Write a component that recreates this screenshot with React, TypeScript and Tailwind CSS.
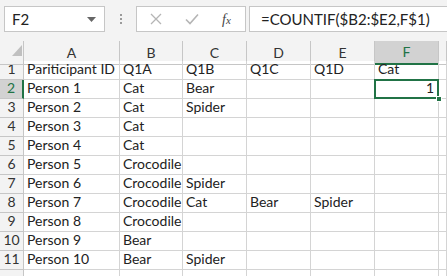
import React from 'react';

const cols = ['A', 'B', 'C', 'D', 'E', 'F', ''];

const rows: string[][] = [
  ['Pariticipant ID', 'Q1A', 'Q1B', 'Q1C', 'Q1D', 'Cat'],
  ['Person 1', 'Cat', 'Bear', '', '', '1'],
  ['Person 2', 'Cat', 'Spider', '', '', ''],
  ['Person 3', 'Cat', '', '', '', ''],
  ['Person 4', 'Cat', '', '', '', ''],
  ['Person 5', 'Crocodile', '', '', '', ''],
  ['Person 6', 'Crocodile', 'Spider', '', '', ''],
  ['Person 7', 'Crocodile', 'Cat', 'Bear', 'Spider', ''],
  ['Person 8', 'Crocodile', '', '', '', ''],
  ['Person 9', 'Bear', '', '', '', ''],
  ['Person 10', 'Bear', 'Spider', '', '', ''],
  ['', '', '', '', '', ''],
];

const gridCols = 'grid grid-cols-[24px_96px_63px_64px_64px_64px_64px_1fr]';

const App = () => {
  return (
    <div className="w-[447px] h-[276px] overflow-hidden bg-white text-[#222] font-['Lato','Liberation_Sans',sans-serif]">
      {/* formula bar */}
      <div className="h-[41px] bg-[#f3f3f3] flex items-start pt-[6px] pl-[4px]">
        <div className="w-[101px] h-[26px] bg-white border border-[#c6c6c6] flex items-center justify-between pl-[7px] pr-[8px] text-[15px]">
          <span>F2</span>
          <svg width="9" height="5" viewBox="0 0 9 5">
            <path d="M0 0 L9 0 L4.5 5 Z" fill="#666" />
          </svg>
        </div>
        <div className="w-[31px] h-[26px] flex flex-col items-center justify-center gap-[2px]">
          <span className="w-[2px] h-[2px] bg-[#9a9a9a]" />
          <span className="w-[2px] h-[2px] bg-[#9a9a9a]" />
          <span className="w-[2px] h-[2px] bg-[#9a9a9a]" />
        </div>
        <div className="w-[110px] h-[26px] bg-white border border-[#c6c6c6] flex items-center pl-[12px]">
          <svg width="12" height="12" viewBox="0 0 12 12" className="ml-[1px]">
            <path d="M1 1 L11 11 M11 1 L1 11" stroke="#b5b5b5" strokeWidth="1.3" />
          </svg>
          <svg width="14" height="12" viewBox="0 0 14 12" className="ml-[23px]">
            <path d="M1 6.5 L5 10.5 L13 1.5" stroke="#b5b5b5" strokeWidth="1.6" fill="none" />
          </svg>
          <span className="ml-[23px] text-[14px] italic text-[#444] font-['Liberation_Serif',serif]">
            f<span className="text-[11px]">x</span>
          </span>
        </div>
        <div className="ml-[3px] flex-1 h-[26px] bg-white border border-r-0 border-[#c6c6c6] flex items-center pl-[11px] text-[15px]">
          =COUNTIF($B2:$E2,F$1)
        </div>
      </div>

      {/* column headers */}
      <div className={`${gridCols} h-[20px] bg-[#f3f3f3] text-[14px] text-[#333]`}>
        <div className="relative border-r border-b border-[#c6c6c6] bg-[#f3f3f3]">
          <svg width="10" height="11" viewBox="0 0 10 11" className="absolute left-[12px] top-[4px]">
            <path d="M10 0 L10 11 L0 11 Z" fill="#c0c0c0" />
          </svg>
        </div>
        {cols.map((c, k) => (
          <div
            key={k}
            className={
              c === 'F'
                ? 'flex items-end justify-center pb-[1px] bg-[#d2d2d2] border-r border-[#c6c6c6] border-b-2 border-b-[#217346] text-[#217346]'
                : 'flex items-end justify-center pb-[1px] border-r border-b border-[#c6c6c6]'
            }
          >
            {c}
          </div>
        ))}
      </div>

      {/* rows */}
      {rows.map((r, i) => (
        <div key={i} className={`${gridCols} h-[19px] text-[14px] leading-none`}>
          <div
            className={
              i === 1
                ? 'flex items-end justify-center pb-[3px] bg-[#d2d2d2] border-b border-[#c6c6c6] border-r-2 border-r-[#217346] text-[#217346]'
                : 'flex items-end justify-center pb-[3px] bg-[#f3f3f3] border-r border-b border-[#c6c6c6] text-[#333]'
            }
          >
            {i < 11 ? i + 1 : ''}
          </div>
          {[...r, ''].map((v, j) => (
            <div
              key={j}
              className={`relative flex items-end pb-[3px] px-[3px] whitespace-nowrap border-r border-b border-[#d4d4d4] ${
                i === 1 && j === 5 ? 'justify-end pr-[4px]' : ''
              }`}
            >
              <span className="relative z-10">{v}</span>
              {i === 1 && j === 5 && (
                <>
                  <div className="absolute -left-[1px] -top-[1px] -right-[1px] -bottom-[1px] border-2 border-[#217346]" />
                  <div className="absolute -right-[4px] -bottom-[4px] w-[6px] h-[6px] bg-[#217346] border border-white z-20" />
                </>
              )}
            </div>
          ))}
        </div>
      ))}
    </div>
  );
};

export default App;
